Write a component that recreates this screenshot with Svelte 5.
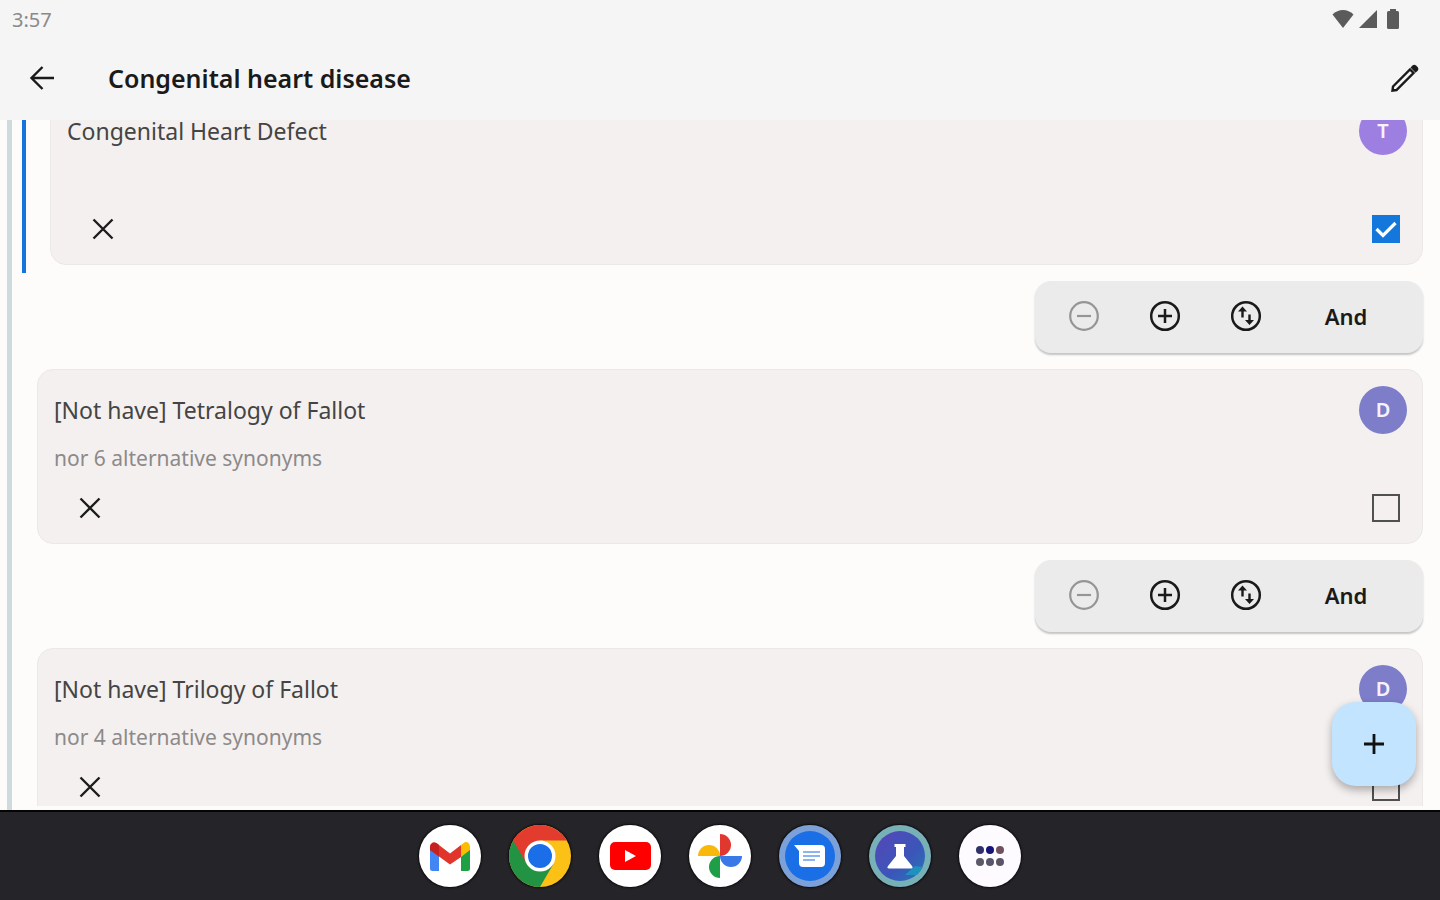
<script lang="ts">
	import { onMount } from 'svelte';

	let listEl: HTMLDivElement;

	let nested = [
		{ title: 'Congenital Heart Defect', note: '', initial: 'T', tone: 'violet', checked: true }
	];

	let criteria = [
		{
			title: '[Not have] Tetralogy of Fallot',
			note: 'nor 6 alternative synonyms',
			initial: 'D',
			tone: 'indigo',
			checked: false
		},
		{
			title: '[Not have] Trilogy of Fallot',
			note: 'nor 4 alternative synonyms',
			initial: 'D',
			tone: 'indigo',
			checked: false
		}
	];

	const apps = ['Gmail', 'Chrome', 'YouTube', 'Photos', 'Messages', 'Lab', 'All apps'];

	onMount(() => {
		// keep the first card partly under the app bar
		listEl.scrollTop = 30;
	});
</script>

{#snippet card(item)}
	<article class="card">
		<div class="card-head">
			<h2>{item.title}</h2>
			<span class="avatar {item.tone}">{item.initial}</span>
		</div>
		<p class="note">{item.note}</p>
		<div class="card-actions">
			<button class="remove" aria-label="Remove {item.title}">
				<svg width="24" height="24" viewBox="0 0 24 24">
					<path d="M2.5 2.5l19 19M21.5 2.5l-19 19" stroke="#1c1c1c" stroke-width="2.4" />
				</svg>
			</button>
			<label class="check">
				<input type="checkbox" bind:checked={item.checked} aria-label="Select {item.title}" />
				<svg width="28" height="28" viewBox="0 0 28 28">
					<path d="M4.5 14l6.500 6.500L23.500 8" fill="none" stroke="#fff" stroke-width="3.200" />
				</svg>
			</label>
		</div>
	</article>
{/snippet}

{#snippet operator()}
	<div class="operator">
		<button class="icon-btn" aria-label="Remove group" disabled>
			<svg width="32" height="32" viewBox="0 0 32 32" fill="none" stroke="#959595" stroke-width="2.200">
				<circle cx="16" cy="16" r="13.800" />
				<path d="M9 16h14" />
			</svg>
		</button>
		<button class="icon-btn" aria-label="Add group">
			<svg width="32" height="32" viewBox="0 0 32 32" fill="none" stroke="#1a1a1a" stroke-width="2.500">
				<circle cx="16" cy="16" r="13.800" />
				<path d="M9 16h14M16 9v14" />
			</svg>
		</button>
		<button class="icon-btn" aria-label="Swap">
			<svg width="32" height="32" viewBox="0 0 32 32" fill="none" stroke="#1a1a1a" stroke-width="2.500">
				<circle cx="16" cy="16" r="13.800" />
				<path d="M12.500 17.500V9M19.500 14.500V22" stroke-width="2.400" />
				<path d="M8 11.500l4.500-5 4.500 5zM15 20l4.500 5 4.500-5z" fill="#1a1a1a" stroke="none" />
			</svg>
		</button>
		<button class="and">And</button>
	</div>
{/snippet}

<div class="screen">
	<header>
		<div class="status">
			<span>3:57</span>
			<div class="status-icons">
				<svg width="22" height="20" viewBox="0 0 22 20">
					<path d="M11 19L.5 5.500C3.500 2.500 7 1 11 1s7.500 1.500 10.500 4.500z" fill="#5b5b5b" />
				</svg>
				<svg width="20" height="20" viewBox="0 0 20 20">
					<path d="M1 19L19 1v18z" fill="#5b5b5b" />
				</svg>
				<svg width="14" height="20" viewBox="0 0 14 20">
					<path d="M4 0h6v2h1.500Q13 2 13 3.500v15Q13 20 11.500 20h-9Q1 20 1 18.500v-15Q1 2 2.500 2H4z" fill="#5b5b5b" />
				</svg>
			</div>
		</div>
		<div class="app-bar">
			<button class="back" aria-label="Back">
				<svg width="28" height="28" viewBox="0 0 28 28" fill="none" stroke="#1a1a1a" stroke-width="2.400">
					<path d="M26 14H4M14.500 3L3.500 14l11 11" />
				</svg>
			</button>
			<h1>Congenital heart disease</h1>
			<button class="edit" aria-label="Edit">
				<svg width="30" height="30" viewBox="0 0 30 30">
					<path d="M3 23.500L20 6.500l3.500 3.500-17 17L2.500 27.500z" fill="none" stroke="#1a1a1a" stroke-width="2.400" />
					<path d="M20.500 4.500L22.500 2.500Q24.200 1 26 2.500l1.800 1.800Q29.200 6 27.700 7.800l-2.200 2z" fill="#1a1a1a" />
				</svg>
			</button>
		</div>
	</header>

	<main>
		<div class="list" bind:this={listEl}>
			<section class="nested">
				{#each nested as item}
					{@render card(item)}
				{/each}
			</section>
			{#each criteria as item}
				{@render operator()}
				{@render card(item)}
			{/each}
		</div>
		<button class="fab" aria-label="Add criterion">
			<svg width="24" height="24" viewBox="0 0 24 24">
				<path d="M12 2v20M2 12h20" stroke="#111" stroke-width="2.800" />
			</svg>
		</button>
	</main>

	<nav class="dock">
		{#each apps as app}
			<button aria-label={app}>
				<svg width="62" height="62" viewBox="0 0 62 62">
					{#if app === 'Gmail'}
						<circle cx="31" cy="31" r="31" fill="#fff" />
						<path d="M11 23l9 7v16h-6.500Q11 46 11 43.500z" fill="#4285f4" />
						<path d="M51 23l-9 7v16h6.500Q51 46 51 43.500z" fill="#1fa045" />
						<path d="M42 20l2-1.500Q47 16 49.500 18 51 19.500 51 22v3l-9 7z" fill="#fbbc04" />
						<path d="M11 25v-3q0-3 2.500-4.200Q16 17 18 18.500l13 10 11-8.500v12L31 39.500 20 31.500z" fill="#e1352b" />
						<path d="M11 25v-3q0-3 2.500-4.200Q16 17 18 18.500l2 1.500v11.500z" fill="#c5221f" />
					{:else if app === 'Chrome'}
						<circle cx="31" cy="31" r="31" fill="#fbc116" />
						<path d="M31 31L4.200 15.500A31 31 0 0 0 31 62l13.400-23z" fill="#229342" />
						<path d="M31 31L4.200 15.500A31 31 0 0 1 57.800 15.500H31z" fill="#e33b2e" />
						<path d="M4.200 15.500L17.600 38.700 31 15.500z" fill="#e33b2e" />
						<circle cx="31" cy="31" r="15.500" fill="#fff" />
						<circle cx="31" cy="31" r="12" fill="#1a6fe8" />
					{:else if app === 'YouTube'}
						<circle cx="31" cy="31" r="31" fill="#fff" />
						<rect x="11" y="17" width="41" height="28" rx="5" fill="#f00" />
						<path d="M26 25l11 6-11 6z" fill="#fff" />
					{:else if app === 'Photos'}
						<circle cx="31" cy="31" r="31" fill="#fff" />
						<path d="M31 9a11 11 0 0 1 0 22z" fill="#e0372f" />
						<path d="M53 31a11 11 0 0 1-22 0z" fill="#3b78e7" />
						<path d="M31 53a11 11 0 0 1 0-22z" fill="#1f9e48" />
						<path d="M9 31a11 11 0 0 1 22 0z" fill="#f9b90a" />
					{:else if app === 'Messages'}
						<circle cx="31" cy="31" r="31" fill="#7ca1d8" />
						<circle cx="31" cy="31" r="25" fill="#1a6fe6" />
						<path d="M15 20h27q4 0 4 4v14q0 4-4 4H24q-4 0-4-4V26z" fill="#fff" />
						<path d="M24 27h17M24 31h17M24 35h12" stroke="#8ab4f3" stroke-width="2" />
					{:else if app === 'Lab'}
						<linearGradient id="lab-fill" x1="0" y1="0" x2="1" y2="1">
							<stop offset="0" stop-color="#5546b8" />
							<stop offset="0.600" stop-color="#3b56b8" />
							<stop offset="1" stop-color="#2478b8" />
						</linearGradient>
						<circle cx="31" cy="31" r="31" fill="#78b0b8" />
						<circle cx="31" cy="31" r="25" fill="url(#lab-fill)" />
						<path d="M36 50h12q4-4 6-8l-8-1z" fill="#2091bd" />
						<path d="M25.500 19h11v3H35V31l8 10q1.500 2.500-1 2.500H20q-2.500 0-1-2.500l8-10v-9h-1.500z" fill="#fff" />
					{:else}
						<circle cx="31" cy="31" r="31" fill="#fdfbff" />
						<circle cx="21" cy="25" r="4" fill="#2f3168" />
						<circle cx="31" cy="25" r="4" fill="#14147a" />
						<circle cx="41" cy="25" r="4" fill="#70505f" />
						<circle cx="21" cy="37" r="4" fill="#5b5966" />
						<circle cx="31" cy="37" r="4" fill="#55566c" />
						<circle cx="41" cy="37" r="4" fill="#5b5468" />
					{/if}
				</svg>
			</button>
		{/each}
	</nav>
</div>

<style>
	:global(body) {
		background: #fdfcfb;
	}

	.screen {
		height: 100vh;
		display: flex;
		flex-direction: column;
		background: #fdfcfb;
		color: #1a1a1a;
		font-family: 'Noto Sans', sans-serif;
	}

	button {
		padding: 0;
		border: none;
		background: none;
		font-family: inherit;
		color: inherit;
		cursor: pointer;
	}

	svg {
		display: block;
	}

	h1,
	h2,
	p {
		margin: 0;
	}

	header {
		background: #f5f5f5;
	}

	.status {
		display: flex;
		justify-content: space-between;
		align-items: center;
		height: 38px;
		padding: 0 40px 0 12px;
		font-size: 20px;
		color: #8a8a8a;
	}

	.status-icons {
		display: flex;
		gap: 4px;
	}

	.status-icons svg:last-child {
		margin-left: 4px;
	}

	.app-bar {
		display: flex;
		align-items: center;
		height: 80px;
		padding: 0 20px 2px 28px;
	}

	h1 {
		flex: 1;
		padding-left: 52px;
		font-size: 25px;
		line-height: 32px;
		font-weight: 600;
	}

	main {
		position: relative;
		flex: 1;
		min-height: 0;
		display: flex;
		margin-left: 7px;
		padding-bottom: 4px;
		border-left: 5px solid #cfdadd;
	}

	.list {
		flex: 1;
		display: flex;
		flex-direction: column;
		gap: 16px;
		padding: 0 17px 0 25px;
		overflow-y: auto;
		scrollbar-width: none;
	}

	.nested {
		margin: 0 0 -8px -15px;
		padding: 0 0 8px 24px;
		border-left: 4px solid #1474dc;
	}

	.card {
		padding: 16px 15px 9px 16px;
		border: 1px solid #ebe8e8;
		border-radius: 16px;
		background: #f4f0ef;
	}

	.card-head {
		display: flex;
		justify-content: space-between;
		align-items: center;
		height: 48px;
	}

	h2 {
		font-size: 23px;
		line-height: 24px;
		font-weight: 400;
		color: #444;
	}

	.avatar {
		width: 48px;
		padding: 12px 0;
		border-radius: 50%;
		font-size: 20px;
		line-height: 24px;
		font-weight: 600;
		text-align: center;
		color: #f6f2ff;
	}

	.violet {
		background: #9c7fe0;
	}

	.indigo {
		background: #7d7dca;
	}

	.note {
		height: 48px;
		font-size: 21px;
		line-height: 48px;
		color: #8c8a8a;
	}

	.card-actions {
		display: flex;
		justify-content: space-between;
		align-items: center;
		height: 52px;
		padding: 0 7px 0 10px;
	}

	.remove {
		display: grid;
		place-items: center;
		width: 52px;
		height: 52px;
	}

	.check {
		display: grid;
	}

	.check input,
	.check svg {
		grid-area: 1 / 1;
	}

	.check input {
		appearance: none;
		width: 28px;
		height: 28px;
		margin: 0;
		border: 2px solid #505050;
	}

	.check input:checked {
		border-color: #1377dc;
		background: #1377dc;
	}

	.check svg {
		visibility: hidden;
		pointer-events: none;
	}

	.check input:checked + svg {
		visibility: visible;
	}

	.operator {
		align-self: flex-end;
		display: flex;
		align-items: center;
		height: 70px;
		padding: 0 17px 2px 8px;
		border-radius: 16px;
		background: #ebebeb;
		box-shadow: 0 2px 2px #c4c4c4;
	}

	.icon-btn {
		display: grid;
		place-items: center;
		width: 81px;
		height: 70px;
	}

	.and {
		width: 120px;
		height: 70px;
		font-size: 22px;
		font-weight: 600;
	}

	.fab {
		position: absolute;
		right: 24px;
		bottom: 24px;
		display: grid;
		place-items: center;
		width: 84px;
		height: 84px;
		border-radius: 24px;
		background: #c2e4ff;
		box-shadow: 0 4px 8px rgba(0, 0, 0, 0.3);
	}

	.dock {
		display: flex;
		justify-content: center;
		align-items: center;
		gap: 28px;
		height: 88px;
		border-top: 2px solid #050505;
		background: #252429;
	}

	.dock button {
		border-radius: 50%;
		box-shadow: 0 0 2px 1px #0c0a0c;
	}
</style>
